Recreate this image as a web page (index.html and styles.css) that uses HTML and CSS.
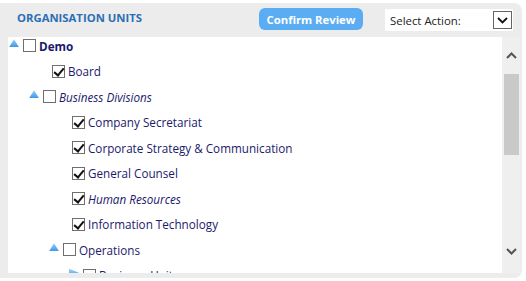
FILE: index.html
```html
<!DOCTYPE html>
<html lang="en">
<head>
  <meta charset="UTF-8" />
  <title>Organisation Units</title>
  <link rel="stylesheet" href="styles.css">
</head>
<body>
  <div class="panel">
    <div class="panel-header">
      <h3 class="panel-title">ORGANISATION UNITS</h3>
      <button class="confirm-btn">Confirm Review</button>
      <div class="action-select">
        <span>Select Action:</span>
        <span class="select-arrow">
          <svg width="11" height="7" viewBox="0 0 11 7"><path d="M1 1 L5.5 5.5 L10 1" fill="none" stroke="#111" stroke-width="1.8"/></svg>
        </span>
      </div>
    </div>

    <div class="panel-body">
      <div class="tree">
        <ul class="tree-list">
          <li class="node level-0">
            <span class="toggle open"></span><span class="box"></span><span class="label bold">Demo</span>
          </li>
          <li class="node leaf level-1">
            <span class="box checked"></span><span class="label">Board</span>
          </li>
          <li class="node level-1">
            <span class="toggle open"></span><span class="box"></span><span class="label italic">Business Divisions</span>
          </li>
          <li class="node leaf level-2">
            <span class="box checked"></span><span class="label">Company Secretariat</span>
          </li>
          <li class="node leaf level-2">
            <span class="box checked"></span><span class="label">Corporate Strategy &amp; Communication</span>
          </li>
          <li class="node leaf level-2">
            <span class="box checked"></span><span class="label">General Counsel</span>
          </li>
          <li class="node leaf level-2">
            <span class="box checked"></span><span class="label italic">Human Resources</span>
          </li>
          <li class="node leaf level-2">
            <span class="box checked"></span><span class="label">Information Technology</span>
          </li>
          <li class="node level-2">
            <span class="toggle open"></span><span class="box"></span><span class="label">Operations</span>
          </li>
          <li class="node level-3">
            <span class="toggle closed"></span><span class="box"></span><span class="label">Business Units</span>
          </li>
        </ul>
      </div>

      <div class="scrollbar">
        <span class="scroll-btn">
          <svg width="11" height="7" viewBox="0 0 11 7"><path d="M1 6 L5.5 1.5 L10 6" fill="none" stroke="#555" stroke-width="2"/></svg>
        </span>
        <div class="scroll-track">
          <div class="scroll-thumb"></div>
        </div>
        <span class="scroll-btn">
          <svg width="11" height="7" viewBox="0 0 11 7"><path d="M1 1 L5.5 5.5 L10 1" fill="none" stroke="#555" stroke-width="2"/></svg>
        </span>
      </div>
    </div>
  </div>
</body>
</html>
```

FILE: styles.css
```css
* {
  margin: 0;
  padding: 0;
  box-sizing: border-box;
}

body {
  background: #fff;
  font-family: 'Open Sans', 'Noto Sans', sans-serif;
}

.panel {
  width: 522px;
  height: 275px;
  margin-top: 3px;
  background: #ececec;
  border-radius: 0 8px 8px 0;
  display: flex;
  flex-direction: column;
}

.panel-header {
  height: 34px;
  flex-shrink: 0;
  display: flex;
  align-items: center;
  padding-left: 17px;
}

.panel-title {
  font-size: 11.3px;
  font-weight: bold;
  color: #2a6fb5;
  width: 242px;
  margin-top: -5px;
}

.confirm-btn {
  height: 22px;
  width: 104px;
  margin-top: -2px;
  background: #5aadf3;
  color: #fff;
  border: none;
  border-radius: 6px;
  font-family: inherit;
  font-size: 11.3px;
  font-weight: bold;
}

.action-select {
  margin-left: 22px;
  width: 128px;
  height: 22px;
  background: #fff;
  display: flex;
  align-items: center;
  justify-content: space-between;
  padding-left: 5px;
  padding-right: 1px;
  font-size: 11.4px;
  color: #222;
}

.select-arrow {
  width: 19px;
  height: 18px;
  border: 1px solid #666;
  display: flex;
  align-items: center;
  justify-content: center;
}

.panel-body {
  flex: 1;
  min-height: 0;
  display: flex;
  padding-left: 8px;
  padding-bottom: 5px;
}

.tree {
  width: 494px;
  background: #fff;
  overflow: hidden;
}

.tree-list {
  list-style: none;
  margin-top: -4px;
}

.node {
  height: 25.5px;
  display: flex;
  align-items: center;
  font-size: 11.7px;
  color: #1b1a6b;
}

.level-0 { padding-left: 1px; }
.level-1 { padding-left: 21px; }
.level-2 { padding-left: 41px; }
.level-3 { padding-left: 61px; }
.leaf.level-1 { padding-left: 44px; }
.leaf.level-2 { padding-left: 64px; }

.toggle {
  width: 10px;
  height: 8px;
  margin-right: 4px;
  margin-top: -5px;
  background: linear-gradient(#9fd2fb, #3d97e8);
}

.toggle.open {
  clip-path: polygon(50% 0, 100% 100%, 0 100%);
}

.toggle.closed {
  clip-path: polygon(0 0, 100% 50%, 0 100%);
}

.box {
  width: 13px;
  height: 13px;
  border: 1px solid #6f6f6f;
  background: #fff;
  margin-right: 3px;
  position: relative;
}

.box.checked::after {
  content: "";
  position: absolute;
  left: 3px;
  top: 0px;
  width: 4px;
  height: 8px;
  border: solid #111;
  border-width: 0 2px 2px 0;
  transform: rotate(40deg);
}

.bold { font-weight: bold; }
.italic { font-style: italic; }

.scrollbar {
  width: 18px;
  display: flex;
  flex-direction: column;
  align-items: center;
  background: #efefef;
}

.scroll-btn {
  height: 24px;
  flex-shrink: 0;
  display: flex;
  align-items: center;
  justify-content: center;
  margin-top: 6px;
}

.scroll-btn:last-child {
  margin-top: 0;
  margin-bottom: 10px;
}

.scroll-track {
  flex: 1;
  width: 100%;
  padding: 7px 1px 0 2px;
}

.scroll-thumb {
  height: 81px;
  background: #c9c9c9;
}
```
